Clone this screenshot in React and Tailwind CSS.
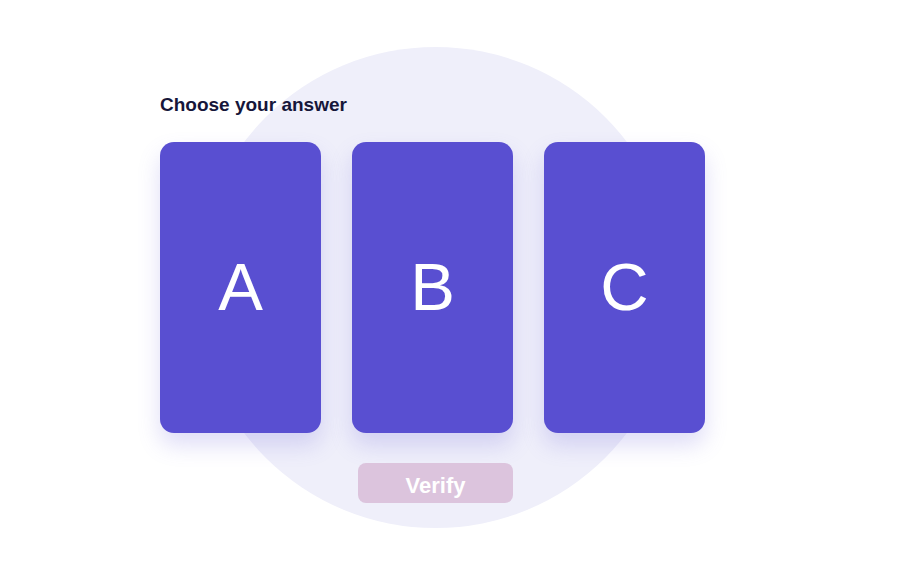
import React, { useState } from 'react';

const options = ['A', 'B', 'C'];

const App = () => {
  const [selected, setSelected] = useState(null);

  return (
    <div className="relative w-[900px] h-[577px] bg-white overflow-hidden font-['Liberation_Sans',Arial,sans-serif]">
      {/* soft circle behind the quiz */}
      <div className="absolute left-[195px] top-[47px] w-[481px] h-[481px] rounded-full bg-[#efeffa]" />

      <div className="relative pl-[160px] pt-[94px]">
        <h2 className="text-[19px] font-bold text-[#16163a] leading-[22px]">Choose your answer</h2>

        <div className="mt-[26px] flex gap-[31px]">
          {options.map((opt) => (
            <button
              key={opt}
              onClick={() => setSelected(opt)}
              className="w-[161px] h-[291px] rounded-[14px] bg-[#594fd1] flex items-center justify-center shadow-[0_12px_22px_rgba(110,100,220,0.22)]"
            >
              <span className="text-white text-[67px] leading-none font-normal -mt-[3px]">{opt}</span>
            </button>
          ))}
        </div>

        <div className="mt-[30px] ml-[198px]">
          <button
            disabled={!selected}
            className="w-[155px] h-[40px] pt-[5px] rounded-[8px] bg-[#dcc4dd] text-white text-[22px] font-bold leading-none"
          >
            Verify
          </button>
        </div>
      </div>
    </div>
  );
};

export default App;
